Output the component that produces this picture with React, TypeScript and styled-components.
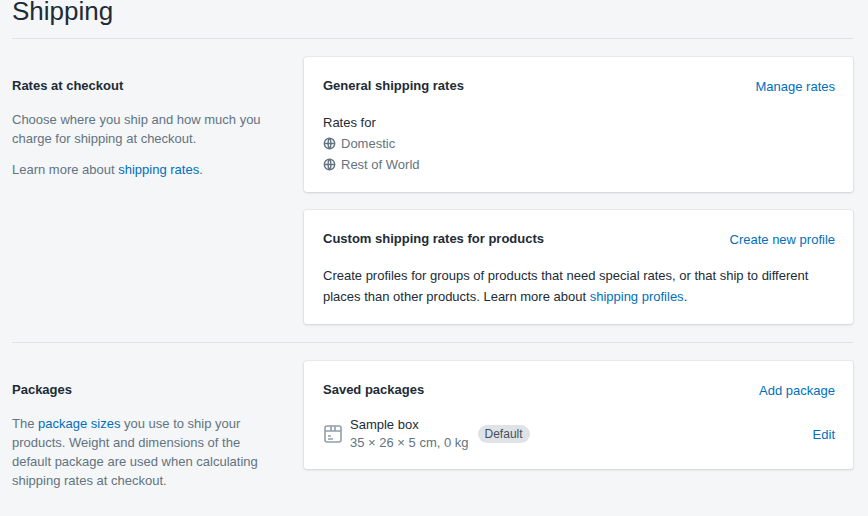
import React from "react";
import styled, { createGlobalStyle } from "styled-components";

const Global = createGlobalStyle`
  body {
    margin: 0;
    background: #f4f6f8;
    font-family: "Liberation Sans", Arial, sans-serif;
    color: #212b36;
    font-size: 13px;
  }
`;

const Page = styled.div`
  padding: 0 15px 0 12px;
  overflow: hidden;
  height: 516px;
`;

const Title = styled.h1`
  margin: -5px 0 0;
  font-size: 26px;
  font-weight: 400;
  line-height: 32px;
  padding-bottom: 11px;
  border-bottom: 1px solid #dfe3e8;
`;

const Section = styled.div<{ $border?: boolean }>`
  display: grid;
  grid-template-columns: 280px 1fr;
  column-gap: 12px;
  padding: 18px 0;
  border-bottom: ${(p) => (p.$border ? "1px solid #dfe3e8" : "none")};
`;

const Aside = styled.div`
  padding-top: 19px;
  padding-right: 24px;
`;

const AsideHead = styled.h2`
  margin: 0 0 14px;
  font-size: 13px;
  font-weight: 600;
  line-height: 20px;
`;

const AsideText = styled.p`
  margin: 0 0 12px;
  color: #637381;
  line-height: 19px;
`;

const Link = styled.a`
  color: #006fbb;
  text-decoration: none;
`;

const Cards = styled.div`
  display: flex;
  flex-direction: column;
  gap: 18px;
`;

const Card = styled.div`
  background: #fff;
  border-radius: 3px;
  box-shadow: 0 0 0 1px rgba(63, 63, 68, 0.05), 0 1px 3px 0 rgba(63, 63, 68, 0.15);
  padding: 19px 18px 17px 19px;
`;

const CardHead = styled.div`
  display: flex;
  justify-content: space-between;
  align-items: center;
  margin-bottom: 16px;
`;

const CardTitle = styled.h3`
  margin: 0;
  font-size: 13px;
  font-weight: 600;
  line-height: 20px;
`;

const Text = styled.p`
  margin: 0;
  line-height: 21px;
`;

const Row = styled.div`
  display: flex;
  align-items: center;
  gap: 5px;
  color: #637381;
  line-height: 21px;
`;

const Pkg = styled.div`
  display: flex;
  align-items: center;
`;

const PkgInfo = styled.div`
  margin-left: 7px;
  line-height: 18px;
`;

const Sub = styled.div`
  color: #637381;
`;

const Badge = styled.span`
  background: #dfe3e8;
  border-radius: 10px;
  padding: 1px 7px;
  font-size: 12px;
  line-height: 16px;
  color: #454f5b;
  margin-left: 9px;
`;

const Globe = () => (
  <svg width="13" height="13" viewBox="0 0 20 20" fill="none" stroke="#637381" strokeWidth="2.2">
    <circle cx="10" cy="10" r="8" />
    <path d="M2 10h16M10 2c-3 3-3 13 0 16M10 2c3 3 3 13 0 16" />
  </svg>
);

const Box = () => (
  <svg width="20" height="20" viewBox="0 0 20 20" fill="none" stroke="#919eab" strokeWidth="1.6">
    <rect x="2" y="2" width="16" height="16" rx="2" />
    <path d="M2 7h16M8 2v5h4V2M5 12h3M5 15h5" />
  </svg>
);

export default function App() {
  return (
    <>
      <Global />
      <Page>
        <Title>Shipping</Title>
        <Section $border>
          <Aside>
            <AsideHead>Rates at checkout</AsideHead>
            <AsideText>Choose where you ship and how much you charge for shipping at checkout.</AsideText>
            <AsideText>
              Learn more about <Link>shipping rates</Link>.
            </AsideText>
          </Aside>
          <Cards>
            <Card>
              <CardHead>
                <CardTitle>General shipping rates</CardTitle>
                <Link>Manage rates</Link>
              </CardHead>
              <Text>Rates for</Text>
              <Row>
                <Globe /> Domestic
              </Row>
              <Row>
                <Globe /> Rest of World
              </Row>
            </Card>
            <Card>
              <CardHead>
                <CardTitle>Custom shipping rates for products</CardTitle>
                <Link>Create new profile</Link>
              </CardHead>
              <Text>
                Create profiles for groups of products that need special rates, or that ship to different places
                than other products. Learn more about <Link>shipping profiles</Link>.
              </Text>
            </Card>
          </Cards>
        </Section>
        <Section>
          <Aside>
            <AsideHead>Packages</AsideHead>
            <AsideText>
              The <Link>package sizes</Link> you use to ship your products. Weight and dimensions of the default
              package are used when calculating shipping rates at checkout.
            </AsideText>
          </Aside>
          <Cards>
            <Card>
              <CardHead>
                <CardTitle>Saved packages</CardTitle>
                <Link>Add package</Link>
              </CardHead>
              <CardHead style={{ marginBottom: 0 }}>
                <Pkg>
                  <Box />
                  <PkgInfo>
                    <div>Sample box</div>
                    <Sub>35 × 26 × 5 cm, 0 kg</Sub>
                  </PkgInfo>
                  <Badge>Default</Badge>
                </Pkg>
                <Link>Edit</Link>
              </CardHead>
            </Card>
          </Cards>
        </Section>
      </Page>
    </>
  );
}
